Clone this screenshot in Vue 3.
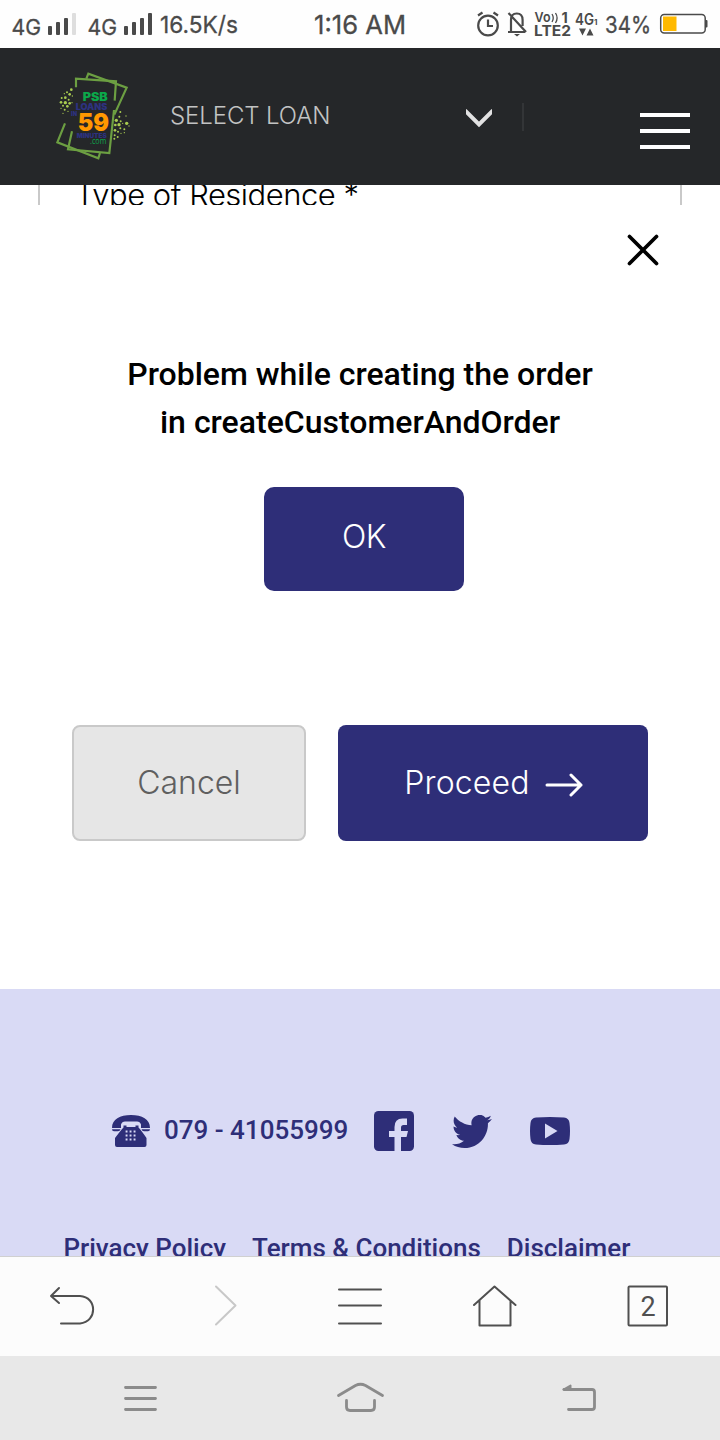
<script setup>
const dots = [
  [79, 89, 4], [66, 97, 3], [74, 103, 4], [58, 101, 2], [61, 113, 4], [50, 114, 3], [71, 119, 3], [82, 108, 2],
  [48, 127, 4], [61, 128, 5], [74, 130, 4], [54, 137, 3], [67, 139, 4], [81, 128, 2], [48, 145, 2], [59, 149, 3], [69, 154, 2], [54, 160, 2],
  [226, 156, 3], [223, 170, 3], [214, 181, 5], [227, 184, 3], [243, 168, 2], [211, 195, 4], [222, 194, 5], [233, 190, 2],
  [245, 190, 5], [252, 198, 2], [226, 205, 3], [210, 211, 4], [219, 215, 3], [238, 208, 3], [228, 220, 2], [209, 226, 3], [218, 231, 3], [208, 236, 3], [238, 218, 2],
]
const keypad = [0, 1, 2].flatMap((r) => [0, 1, 2].map((c) => ({ x: 14.5 + c * 4, y: 15.5 + r * 4 })))
const links = ['Privacy Policy', 'Terms & Conditions', 'Disclaimer']
</script>

<template>
  <div class="screen">
    <div class="status">
      <svg width="720" height="48" viewBox="0 0 720 48" fill="#4a4a4a">
        <g class="st">
          <text x="11.5" y="34.5" font-size="21.500" textLength="29.5" lengthAdjust="spacingAndGlyphs">4G</text>
          <text x="87.5" y="34.5" font-size="21.500" textLength="29.5" lengthAdjust="spacingAndGlyphs">4G</text>
          <text x="160" y="33" font-size="23.5" textLength="78" lengthAdjust="spacingAndGlyphs">16.5K/s</text>
          <text x="314" y="34" font-size="26" textLength="92" lengthAdjust="spacingAndGlyphs">1:16 AM</text>
          <text x="605" y="33" font-size="23" textLength="46" lengthAdjust="spacingAndGlyphs">34%</text>
        </g>
        <g class="bold">
          <text class="vo" x="534.5" y="22" font-size="13.5" textLength="16" lengthAdjust="spacingAndGlyphs">Vo</text>
          <text x="561.500" y="22.500" font-size="14.500">1</text>
          <text x="534" y="36" font-size="15" textLength="37" lengthAdjust="spacingAndGlyphs">LTE2</text>
          <text class="vo" x="575" y="25" font-size="15.5" textLength="19" lengthAdjust="spacingAndGlyphs">4G</text>
          <text x="594" y="25" font-size="8">1</text>
        </g>
        <rect x="48" y="26" width="4" height="9" rx="1" /><rect x="56" y="22" width="4" height="13" rx="1" />
        <rect x="64" y="18" width="4" height="17" rx="1" /><rect x="72" y="13" width="4" height="22" rx="1" fill="#dedede" />
        <rect x="124" y="26" width="4" height="9" rx="1" /><rect x="132" y="22" width="4" height="13" rx="1" />
        <rect x="140" y="18" width="4" height="17" rx="1" /><rect x="148" y="13" width="4" height="22" rx="1" />
        <g fill="none" stroke="#4a4a4a" stroke-width="2.200">
          <circle cx="488" cy="25.500" r="9.800" />
          <path d="M488 19.500v6.500h5M478 15.500l4.500-3M493.500 12.500l4.500 3" />
          <path d="M508 32h17M511 31.500V20q0-6.500 5.800-6.500t5.800 6.500v6M508.500 13l17.500 19" />
          <path d="M552 14q2.500 4 0 8M555.500 13q3.200 5 0 10" stroke-width="1.300" />
          <rect x="660.700" y="14.500" width="44.500" height="18.500" rx="3.500" stroke-width="1.500" />
        </g>
        <path d="M514 34h6l-3 2.500zM579 28.500h7l-3.500 7zM586.500 35.500h7l-3.500-7z" />
        <rect x="663" y="16.500" width="13.500" height="14.500" fill="#ffb900" />
        <rect x="705" y="20" width="2.500" height="7.500" rx="1" />
      </svg>
    </div>

    <header class="header">
      <svg class="logo" width="100" height="110" viewBox="0 0 300 330">
        <g fill="none" stroke="#6c9f42" stroke-width="6.500">
          <path d="M93 82V56L213 64L209 122M207 150L193 279L69 268L81 214" />
          <path d="M124 56L130 41L245 83L208 164M60 190L37 247L160 295L165 279" />
        </g>
        <circle v-for="(d, i) in dots" :key="i" :cx="d[0]" :cy="d[1]" :r="d[2]" fill="#a9cc50" />
        <g class="lt">
          <text x="113" y="123" font-size="34" textLength="75" lengthAdjust="spacingAndGlyphs" fill="#0ba84a">PSB</text>
          <text x="92" y="149" font-size="26" textLength="95" lengthAdjust="spacingAndGlyphs" fill="#2d3280">LOANS</text>
          <text x="78" y="169" font-size="17" textLength="18" lengthAdjust="spacingAndGlyphs" fill="#2d3280">IN</text>
          <text x="98" y="214" font-size="73" textLength="94" lengthAdjust="spacingAndGlyphs" fill="#ff9800">59</text>
          <text x="95" y="233" font-size="19" textLength="90" lengthAdjust="spacingAndGlyphs" fill="#2d3280">MINUTES</text>
          <text class="com" x="135" y="252" font-size="25" textLength="49" lengthAdjust="spacingAndGlyphs" fill="#0ba84a">.com</text>
        </g>
      </svg>
      <span class="select">SELECT LOAN</span>
      <svg class="chev" width="26" height="22" viewBox="0 0 26 22"><path d="M-1 1.500L13 15.500L27 1.500" fill="none" stroke="#e2e2e2" stroke-width="4" /></svg>
      <i class="sep"></i>
      <div class="burger"><i></i><i></i><i></i></div>
    </header>

    <div class="field"><span>Type of Residence *</span></div>

    <section class="dialog">
      <svg class="close" width="32" height="32" viewBox="0 0 32 32"><path d="M2.500 2.500L29.500 29.500M29.500 2.500L2.500 29.500" stroke="#000" stroke-width="3.700" stroke-linecap="round" /></svg>
      <p class="msg">Problem while creating the order<br>in createCustomerAndOrder</p>
      <button class="ok">OK</button>
    </section>

    <div class="actions">
      <button class="cancel">Cancel</button>
      <button class="proceed">
        <span>Proceed</span>
        <svg width="38" height="26" viewBox="0 0 38 26"><path d="M2 13H36M26 3L36 13L26 23" fill="none" stroke="#fff" stroke-width="3" stroke-linecap="round" stroke-linejoin="round" /></svg>
      </button>
    </div>

    <footer class="footer">
      <div class="contact">
        <svg class="phone" width="38" height="32" viewBox="0 0 38 32" fill="#2e2e78">
          <path d="M0 13C0 4 8 0 19 0S38 4 38 13H29V9.500Q28 6.500 25 6.500H13Q10 6.500 9 9.500V13ZM0 14.200H8.500Q8 16.200 6 16.200H2Q0 16.200 0 14.200ZM29.500 14.200H38Q38 16.200 36 16.200H32Q30 16.200 29.500 14.200Z" />
          <path d="M11.500 10.500H14.500V12H23.500V10.500H26.500V12.500Q29 15 34.500 23V30Q34.500 32 32.500 32H5Q3 32 3 30V23Q9 15 11.500 12.500Z" />
          <rect v-for="(k, i) in keypad" :key="i" :x="k.x - 0.9" :y="k.y" width="1.900" height="2" fill="#d9daf5" />
        </svg>
        <span class="number">079 - 41055999</span>
        <svg class="fb" width="40" height="40" viewBox="0 0 40 40">
          <rect width="40" height="40" rx="4.500" fill="#2e2e78" />
          <path d="M20.500 40V26H15V20H20.500V16Q20.500 7.500 28.500 7.500H33V14H29.500Q27 14 27 16.500V20H34L32.500 26H27V40Z" fill="#d9daf5" />
        </svg>
        <svg class="tw" width="40" height="33" viewBox="0 0 24 19.500" preserveAspectRatio="none" fill="#2e2e78">
          <path d="M23.950 2.320c-.880.390-1.830.650-2.830.770 1.020-.610 1.800-1.570 2.160-2.720-.950.560-2 .970-3.120 1.190A4.920 4.920 0 0 0 11.780 6.040C7.690 5.840 4.070 3.880 1.640.900.350 3.110.970 6.010 3.160 7.470c-.810-.030-1.570-.250-2.230-.620-.050 2.280 1.580 4.420 3.950 4.890-.690.190-1.450.230-2.220.080.630 1.960 2.440 3.380 4.600 3.420A9.900 9.900 0 0 1 0 17.270a13.900 13.900 0 0 0 7.550 2.210c9.140 0 14.310-7.720 14-14.640a10 10 0 0 0 2.400-2.520z" />
        </svg>
        <svg class="yt" width="40" height="28" viewBox="0 0 40 28">
          <path d="M6 .5Q20-.5 34 .5Q39 1 39.500 6Q40.500 14 39.500 22Q39 27 34 27.500Q20 28.500 6 27.500Q1 27 .5 22Q-.5 14 .5 6Q1 1 6 .5Z" fill="#2e2e78" />
          <path d="M15 6.500L27.500 14L15 21.500Z" fill="#d9daf5" />
        </svg>
      </div>
      <nav class="links"><a v-for="l in links" :key="l">{{ l }}</a></nav>
    </footer>

    <div class="toolbar">
      <svg width="720" height="99" viewBox="0 0 720 99" fill="none" stroke="#505050" stroke-width="2" stroke-linecap="round" stroke-linejoin="round">
        <path d="M61 66.500H80C97.500 65 97.500 40 80 39H51M59 31L51 39L59 46" />
        <path d="M216 29.500L235.500 48.500L216 67.500" stroke="#c8c8c8" />
        <path d="M339 32.500H381M339 48.500H381M339 66.500H381" />
        <path d="M474 48L494.500 29.500L515.500 48M479.500 43.500V68.500H510.500V43.500" />
        <rect x="628.500" y="29.500" width="38.500" height="39" rx="1" />
        <text class="tab" x="648" y="59" text-anchor="middle" font-size="27" fill="#505050" stroke="none">2</text>
      </svg>
    </div>

    <div class="sysnav">
      <svg width="720" height="84" viewBox="0 0 720 84" fill="none" stroke="#8b8b8b" stroke-width="2.800" stroke-linecap="round" stroke-linejoin="round">
        <path d="M125.500 31.500H155.500M125.500 42.500H155.500M125.500 53.500H155.500" />
        <path d="M338.500 39.500L355.500 29.500Q360.500 27 365.500 29.500L382.500 39.500M346.500 44.500V51Q346.500 54.500 350 54.500H371Q374.500 54.500 374.500 51V44.500" />
        <path d="M568.500 53.500H592Q594.500 53.500 594.500 51V36Q594.500 33.500 592 33.500H564" />
        <path d="M563.500 33.500L570.500 29.500V33.500Z" fill="#8b8b8b" stroke-width="2" />
      </svg>
    </div>
  </div>
</template>

<style>
html, body { margin: 0; background: #fff; }
</style>

<style scoped>
.screen { width: 720px; height: 1440px; display: flex; flex-direction: column; overflow: hidden; background: #fff; font-family: Inter, "Liberation Sans", sans-serif; }
svg { display: block; flex: none; }
button { box-sizing: border-box; border: 0; padding: 0; font: 300 32px/40px Inter, "Liberation Sans", sans-serif; display: flex; justify-content: center; align-items: center; }
.status { height: 48px; flex: none; background: #fefefe; }
.st { font-family: Inter, sans-serif; font-weight: 400; stroke: #4a4a4a; stroke-width: 0.3px; }
.bold { font-family: Inter, sans-serif; font-weight: 700; }
.vo { font-weight: 600; }
.header { height: 137px; flex: none; display: flex; align-items: flex-start; background: #252729; box-sizing: border-box; }
.logo { margin: 12px 0 0 45px; }
.lt { font-family: Inter, sans-serif; font-weight: 900; }
.com { font-weight: 500; font-family: "Open Sans", sans-serif; }
.select { width: 296px; margin: 52px 0 0 25px; font-size: 24px; line-height: 32px; font-weight: 300; color: #c2c3c3; letter-spacing: -0.1px; }
.chev { margin-top: 61px; }
.sep { width: 2px; height: 28px; margin: 55px 0 0 30px; background: #333537; }
.burger { display: flex; flex-direction: column; gap: 12px; width: 50px; margin: 65px 0 0 116px; }
.burger i { height: 4px; background: #fff; }
.field { height: 20px; flex: none; margin: 0 38px; border: solid #c9c9c9; border-width: 0 2px; overflow: hidden; display: flex; align-items: flex-start; padding-left: 35px; }
.field span { font-size: 31px; line-height: 40px; font-weight: 300; color: #000; letter-spacing: -0.5px; margin-top: -10px; }
.dialog { height: 386px; flex: none; display: flex; flex-direction: column; }
.close { margin: 29px 61px 0 auto; }
.msg { margin: 84px 0 0; text-align: center; font: 500 32px/48px Roboto, sans-serif; color: #000; }
.ok { width: 200px; height: 104px; margin: 41px 0 0 264px; border-radius: 10px; background: #2e2e78; color: #fff; padding-bottom: 4px; letter-spacing: -0.6px; }
.actions { display: flex; gap: 32px; flex: none; margin: 134px 72px 148px; }
.cancel { width: 234px; height: 116px; border: 2px solid #c9c9c9; border-radius: 8px; background: #e6e6e6; color: #5f5f5f; }
.proceed { width: 310px; height: 116px; border-radius: 8px; background: #2e2e78; color: #fff; gap: 15px; letter-spacing: 0.15px; padding-left: 1px; }
.proceed svg { margin-top: 4px; }
.footer { height: 267px; flex: none; background: #d9daf5; overflow: hidden; color: #2e2e78; font: 500 26px/32px Roboto, sans-serif; }
.contact { display: flex; align-items: center; height: 40px; margin: 122px 0 0 112px; }
.number { width: 196px; margin: -3px 0 0 14px; white-space: nowrap; }
.fb { margin-left: 14px; }
.tw { margin-left: 38px; }
.yt { margin-left: 38px; }
.links { display: flex; gap: 26px; margin: 81px 0 0 63.4px; white-space: nowrap; }
.toolbar { height: 99px; flex: none; border-top: 1px solid #d0d0d0; background: #fcfcfc; }
.tab { font-family: Roboto, sans-serif; }
.sysnav { height: 84px; flex: none; background: #e8e8e8; }
</style>
